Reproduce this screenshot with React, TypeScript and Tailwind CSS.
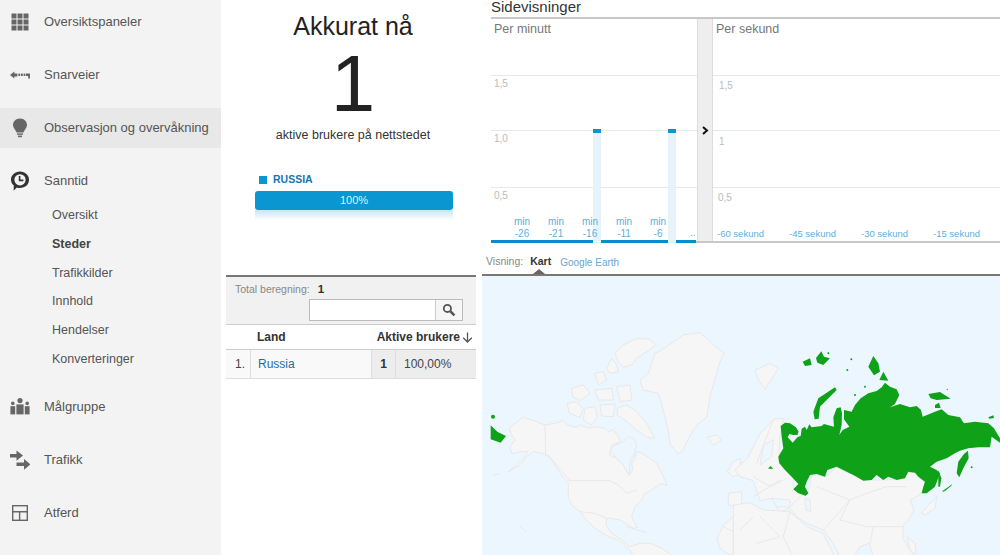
const GridIcon = () => (
  <svg width="20" height="20" viewBox="0 0 20 20" fill="#666">
    <rect x="1.5" y="1.5" width="5" height="5" />
    <rect x="7.5" y="1.5" width="5" height="5" />
    <rect x="13.5" y="1.5" width="5" height="5" />
    <rect x="1.5" y="7.5" width="5" height="5" />
    <rect x="7.5" y="7.5" width="5" height="5" />
    <rect x="13.5" y="7.5" width="5" height="5" />
    <rect x="1.5" y="13.5" width="5" height="5" />
    <rect x="7.5" y="13.5" width="5" height="5" />
    <rect x="13.5" y="13.5" width="5" height="5" />
  </svg>
);

const ShortcutIcon = () => (
  <svg width="20" height="20" viewBox="0 0 20 20" fill="#666">
    <path d="M0 10 L4.4 6.4 V8.6 H7.4 V11.4 H4.4 V13.6 Z" />
    <rect x="8.4" y="8.6" width="1.8" height="2.4" />
    <rect x="11" y="8.6" width="1.8" height="2.4" />
    <rect x="13.6" y="8.6" width="1.6" height="2.4" />
    <path d="M15.8 8.6 H20 V13.4 H18.2 V11 H15.8 Z" />
  </svg>
);

const BulbIcon = () => (
  <svg width="20" height="20" viewBox="0 0 20 20" fill="#666">
    <path d="M10 0.5 C14 0.5 17 3.4 17 7 C17 10 14.6 11.5 13.4 14.5 H6.6 C5.4 11.5 3 10 3 7 C3 3.4 6 0.5 10 0.5 Z" />
    <rect x="7" y="15.4" width="6" height="1.4" />
    <rect x="8" y="17.6" width="4" height="1.6" />
  </svg>
);

const ClockIcon = () => (
  <svg width="20" height="20" viewBox="0 0 20 20">
    <path d="M10 0.5 C15.2 0.5 19 4.2 19 8.8 C19 13.6 15.2 17 10 17 C8.8 17 7.8 16.8 6.8 16.4 L3.6 19.8 L3.8 14.6 C2 13 1 11 1 8.8 C1 4.2 4.8 0.5 10 0.5 Z" fill="#333" />
    <circle cx="10" cy="8.8" r="5.6" fill="#f3f3f3" />
    <path d="M9.6 5 V9.4 H13.4" fill="none" stroke="#333" strokeWidth="1.6" />
  </svg>
);

const PeopleIcon = () => (
  <svg width="20" height="20" viewBox="0 0 20 20" fill="#666">
    <circle cx="10" cy="3.6" r="2.6" />
    <circle cx="2.8" cy="6.4" r="1.8" />
    <circle cx="17.2" cy="6.4" r="1.8" />
    <path d="M6.4 7.4 H13.6 V17.4 H6.4 Z" />
    <path d="M0.4 9.2 H5.2 V17.4 H0.4 Z" />
    <path d="M14.8 9.2 H19.6 V17.4 H14.8 Z" />
  </svg>
);

const TrafficIcon = () => (
  <svg width="20" height="20" viewBox="0 0 20 20" fill="#666">
    <path d="M-0.5 4 H6.5 V0.4 L13 5.6 L6.5 10.8 V7.4 H-0.5 Z" />
    <path d="M6.5 12.4 H14 V9 L20.5 14.4 L14 19.8 V16 H6.5 Z" />
  </svg>
);

const LayoutIcon = () => (
  <svg width="20" height="20" viewBox="0 0 20 20" fill="none" stroke="#666" strokeWidth="1.4">
    <rect x="2.7" y="2.7" width="14.6" height="14.6" />
    <path d="M2.7 8.8 H17.3 M9.6 8.8 V17.3" />
  </svg>
);

const SearchIcon = () => (
  <svg width="14" height="14" viewBox="0 0 14 14" fill="none" stroke="#555">
    <circle cx="5.4" cy="5.4" r="3.6" strokeWidth="1.8" />
    <path d="M8.2 8.2 L12.4 12.4" strokeWidth="2.6" />
  </svg>
);

const navTop = [
  { label: "Oversiktspaneler", icon: <GridIcon /> },
  { label: "Snarveier", icon: <ShortcutIcon /> },
  { label: "Observasjon og overvåkning", icon: <BulbIcon />, active: true },
  { label: "Sanntid", icon: <ClockIcon /> },
];
const navSub = ["Oversikt", "Steder", "Trafikkilder", "Innhold", "Hendelser", "Konverteringer"];
const navBottom = [
  { label: "Målgruppe", icon: <PeopleIcon /> },
  { label: "Trafikk", icon: <TrafficIcon /> },
  { label: "Atferd", icon: <LayoutIcon /> },
];

function NavRow({ label, icon, active }: { label: string; icon: React.ReactNode; active?: boolean }) {
  return (
    <div className={active ? "mb-[13px] flex h-[40px] items-center bg-[#e8e8e8]" : "mb-[13px] flex h-[40px] items-center"}>
      <div className="ml-[10px] w-[34px]">{icon}</div>
      <span className="text-[13px] text-[#555]">{label}</span>
    </div>
  );
}

function Sidebar() {
  return (
    <aside className="h-full w-[221px] shrink-0 bg-[#f3f3f3] pt-[2px]">
      {navTop.map((n) => (
        <NavRow key={n.label} {...n} />
      ))}
      <div className="-mt-[13px] mb-[13px] pl-[52px]">
        {navSub.map((s) => (
          <div
            key={s}
            className={s === "Steder" ? "flex h-[28.8px] items-center text-[12.5px] font-bold text-[#444]" : "flex h-[28.8px] items-center text-[12.5px] text-[#555]"}
          >
            {s}
          </div>
        ))}
      </div>
      {navBottom.map((n) => (
        <NavRow key={n.label} {...n} />
      ))}
    </aside>
  );
}

function ActivePanel() {
  return (
    <section className="w-[260px] shrink-0 px-[5px]">
      <div className="flex h-[275px] flex-col items-center pl-[4px]">
        <h1 className="mt-[10px] text-[25px] leading-[32px] text-[#222]">Akkurat nå</h1>
        <div className="mt-0 text-[80px] leading-[84px] text-[#222]">1</div>
        <p className="mt-px text-[12.5px] leading-[16px] text-[#333]">aktive brukere på nettstedet</p>
        <div className="mt-[29px] ml-[2px] w-[198px]">
          <div className="ml-[4px] flex items-center gap-[6px]">
            <span className="size-[8px] bg-[#0a96d0]" />
            <span className="text-[10.5px] font-bold text-[#1a74b0]">RUSSIA</span>
          </div>
          <div className="mt-[3px] flex h-[19px] items-center justify-center rounded-[3px] bg-[#0a96d0] text-[11px] text-[#dff2fb]">
            100%
          </div>
          <div className="h-[10px] bg-gradient-to-b from-[#c4e6f5] to-white" />
        </div>
      </div>

      <div className="w-[250px] border-t-2 border-[#777] text-[12px]">
        <div className="h-[48px] border-b border-[#ccc] bg-[#f1f1f1] pl-[9px]">
          <div className="flex items-center pt-[5px] leading-[14px]">
            <span className="text-[10.5px] text-[#888]">Total beregning:</span>
            <span className="ml-[8px] text-[11.5px] font-bold text-[#333]">1</span>
          </div>
          <div className="mt-[3px] ml-[74px] flex h-[22px] w-[154px] border border-[#bbb] bg-white">
            <div className="flex-1" />
            <div className="flex w-[27px] items-center justify-center border-l border-[#ccc] bg-[#f6f6f6]">
              <SearchIcon />
            </div>
          </div>
        </div>
        <div className="flex h-[25px] items-center border-b border-[#ccc] bg-white font-bold text-[#333]">
          <span className="w-[31px]" />
          <span>Land</span>
          <span className="ml-auto">Aktive brukere</span>
          <span className="ml-[2px] mr-[3px] text-[#555]">
            <svg width="11" height="11" viewBox="0 0 11 11" fill="none" stroke="#555" strokeWidth="1.3">
              <path d="M5.5 0.5 V10 M1.2 5.8 L5.5 10 L9.8 5.8" />
            </svg>
          </span>
        </div>
        <div className="flex h-[29px] items-center border-b border-[#ddd] text-[#444]">
          <span className="flex h-full w-[25px] items-center border-r border-[#ddd] bg-[#f9f9f9] pl-[9px]">1.</span>
          <span className="flex h-full w-[121px] items-center border-r border-[#ddd] bg-[#f9f9f9] pl-[7px] text-[#1a6ea8]">Russia</span>
          <span className="flex h-full w-[24px] items-center justify-center border-r border-[#ddd] bg-[#ededed] font-bold text-[#333]">1</span>
          <span className="flex h-full flex-1 items-center bg-[#ededed] pl-[8px]">100,00%</span>
        </div>
      </div>
    </section>
  );
}

const minuteLabels = [
  { a: "-26", c: "left-[21px]" },
  { a: "-21", c: "left-[55px]" },
  { a: "-16", c: "left-[89px]" },
  { a: "-11", c: "left-[123px]" },
  { a: "-6", c: "left-[157px]" },
];
const secondLabels = [
  { a: "-60 sekund", c: "left-[4px]" },
  { a: "-45 sekund", c: "left-[76px]" },
  { a: "-30 sekund", c: "left-[148px]" },
  { a: "-15 sekund", c: "left-[220px]" },
];

function GridLines() {
  return (
    <>
      <div className="absolute inset-x-0 top-[56px] h-px bg-[#e8e8e8]" />
      <div className="absolute inset-x-0 top-[111px] h-px bg-[#e8e8e8]" />
      <div className="absolute inset-x-0 top-[168px] h-px bg-[#e8e8e8]" />
    </>
  );
}

function Charts() {
  return (
    <div className="flex h-[226px] border-y-2 border-y-[#c8c8c8]">
      <div className="relative w-[206px] shrink-0">
        <GridLines />
        <span className="absolute left-[3px] top-px text-[12.5px] text-[#777]">Per minutt</span>
        <span className="absolute left-[3px] top-[57px] text-[10px] text-[#bbb]">1,5</span>
        <span className="absolute left-[3px] top-[112px] text-[10px] text-[#bbb]">1,0</span>
        <span className="absolute left-[3px] top-[169px] text-[10px] text-[#bbb]">0,5</span>
        <div className="absolute left-[102px] top-[110px] h-[114px] w-[8px] bg-[#e6f3fb]">
          <div className="h-[4px] bg-[#0a96d0]" />
        </div>
        <div className="absolute left-[177px] top-[110px] h-[114px] w-[8px] bg-[#e6f3fb]">
          <div className="h-[4px] bg-[#0a96d0]" />
        </div>
        {minuteLabels.map((l) => (
          <div key={l.a} className={`absolute top-[197px] w-[20px] text-center text-[10px] leading-[12px] text-[#5bb0dc] ${l.c}`}>
            <div>min</div>
            <div>{l.a}</div>
          </div>
        ))}
        <span className="absolute left-[199px] top-[208px] text-[10px] leading-[12px] text-[#5bb0dc]">..</span>
        <div className="absolute -bottom-[2px] left-0 h-[3px] w-[102px] bg-[#0a8cc8]" />
        <div className="absolute -bottom-[2px] left-[110px] h-[3px] w-[67px] bg-[#0a8cc8]" />
        <div className="absolute -bottom-[2px] left-[185px] h-[3px] w-[20px] bg-[#0a8cc8]" />
      </div>
      <div className="relative flex w-[16px] shrink-0 items-start justify-center border-x border-x-[#ddd] bg-[#eeeeee] pt-[107px]">
        <svg width="7" height="9" viewBox="0 0 7 9" fill="none" stroke="#111" strokeWidth="2">
          <path d="M1 1 L5 4.5 L1 8" />
        </svg>
      </div>
      <div className="relative flex-1">
        <GridLines />
        <span className="absolute left-[3px] top-px text-[12.5px] text-[#777]">Per sekund</span>
        <span className="absolute left-[6px] top-[59px] text-[10px] text-[#bbb]">1,5</span>
        <span className="absolute left-[6px] top-[115px] text-[10px] text-[#bbb]">1</span>
        <span className="absolute left-[5px] top-[171px] text-[10px] text-[#bbb]">0,5</span>
        {secondLabels.map((l) => (
          <span key={l.a} className={`absolute top-[209px] text-[9.5px] leading-[12px] text-[#5bb0dc] ${l.c}`}>
            {l.a}
          </span>
        ))}
      </div>
    </div>
  );
}

const land = "#f6f6f6";
const edge = "#e6e6e6";
const sea = "#ebf6fe";
const green = "#0fa118";

// Map is drawn in reference page coordinates; each group is traced at 3x
function WorldMap() {
  return (
    <svg className="block" width="518" height="279" viewBox="482 276 518 279">
      <rect x="482" y="276" width="518" height="279" fill={sea} />
      <g transform="translate(480 330) scale(0.3333)" fill={land} stroke={edge} strokeWidth="2.6" strokeLinejoin="round">
        <path d="M88 295 L100 285 L128 262 L150 268 L195 285 L225 280 L250 272 L262 285 L290 292 L300 285 L325 295 L345 290 L375 295 L385 305 L400 300 L415 320 L420 335 L395 345 L388 375 L410 385 L430 405 L448 437 L458 420 L455 400 L465 385 L470 365 L490 372 L510 385 L530 400 L545 430 L552 445 L562 465 L540 462 L515 480 L495 490 L485 510 L465 530 L455 560 L462 575 L472 592 L460 595 L445 585 L420 570 L395 565 L380 565 L378 585 L395 610 L425 630 L450 650 L480 640 L510 640 L545 655 L575 675 L560 682 L465 682 L445 655 L415 630 L385 620 L345 595 L320 570 L300 545 L275 525 L265 500 L265 460 L245 435 L225 405 L205 378 L180 368 L160 365 L140 380 L120 405 L85 425 L110 405 L130 385 L145 365 L120 365 L95 372 L90 350 L105 330 L95 315 Z" />
        <path d="M195 285 L197 372 M205 375 L270 452 M265 452 L390 452 L415 465 L440 490 L470 480 M300 545 L345 550 L380 565" fill="none" />
        <path d="M390 360 L405 345 L430 335 L445 320 L460 325 L470 345 L462 375 L450 395 L448 437 L430 405 L410 385 Z" fill={sea} />
        <path d="M405 70 L430 45 L470 25 L510 28 L527 45 L505 62 L470 85 L455 105 L430 112 L415 95 Z" />
        <path d="M380 115 L395 85 L410 105 L415 125 L390 130 Z" />
        <path d="M345 130 L370 125 L380 150 L355 165 Z" />
        <path d="M410 170 L450 165 L455 210 L420 215 Z" />
        <path d="M345 180 L395 175 L400 210 L355 210 Z" />
        <path d="M275 175 L310 165 L330 190 L300 212 L278 200 Z" />
        <path d="M262 220 L290 215 L310 235 L300 262 L268 250 Z" />
        <path d="M315 235 L345 230 L352 262 L335 285 L310 270 Z" />
        <path d="M360 225 L405 222 L400 260 L365 258 Z" />
        <path d="M412 235 L440 225 L470 245 L500 280 L525 325 L500 322 L470 300 L435 270 L412 255 Z" />
        <path d="M480 150 L505 130 L525 70 L545 60 L570 42 L590 30 L610 15 L660 8 L680 25 L695 40 L732 70 L722 90 L715 112 L700 165 L690 200 L680 262 L655 280 L640 300 L620 335 L610 360 L596 372 L580 355 L570 340 L565 300 L555 262 L545 220 L535 190 L490 180 Z" />
        <path d="M682 322 L710 315 L725 330 L700 345 Z" />
        <path d="M742 425 L760 395 L780 385 L785 430 L760 440 Z" />
        <path d="M745 490 L785 485 L785 530 L745 525 Z" />
        <path d="M712 625 L730 585 L760 560 L790 555 L790 682 L745 672 L720 655 Z" />
        <path d="M730 590 L790 620 M760 560 L760 682" fill="none" />
        <path d="M120 590 L138 605 M40 435 L60 432 M440 590 L500 608" fill="none" />
      </g>
      <g transform="translate(480 330) scale(0.3333)" fill={green}>
        <circle cx="39" cy="260" r="6" />
        <path d="M32 286 L52 305 L78 318 L62 338 L32 328 Z" />
      </g>
      <g transform="translate(740 330) scale(0.3333)" fill={land} stroke={edge} strokeWidth="2.6" strokeLinejoin="round">
        <path d="M45 120 L90 100 L115 115 L75 178 L55 150 Z" />
        <path d="M22 385 L60 312 L100 268 L130 265 L120 320 L115 395 L160 445 L160 475 L195 497 L205 490 L215 435 L255 440 L290 412 L340 435 L385 450 L440 450 L490 445 L505 425 L530 430 L555 460 L545 490 L520 505 L510 510 L522 540 L505 570 L490 585 L488 625 L525 682 L400 682 L388 640 L360 650 L340 682 L300 682 L280 640 L250 600 L200 580 L170 560 L150 535 L120 545 L95 505 L60 512 L40 452 L0 440 L-15 420 Z" />
        <path d="M-20 525 L30 518 L70 540 L150 545 L200 590 L250 610 L285 682 L-20 682 Z" />
        <path d="M545 550 L565 525 L590 500 L585 535 L555 555 Z" />
        <path d="M502 620 L525 640 L530 682 L510 660 Z" />
        <path d="M95 505 L150 510 L150 532 L110 530 Z" fill={sea} />
        <path d="M195 505 L210 508 L212 545 L198 540 Z" fill={sea} />
        <path d="M70 345 L100 330 L95 380 L60 405 Z" fill={sea} />
        <path d="M40 440 L90 470 L130 450 M230 470 L330 510 L380 490 L440 470 L500 470 M330 510 L300 570 L380 590 L490 590 M150 530 L200 480 M60 560 L120 620 L50 640 M150 545 L130 620 L160 682 M250 600 L330 510 M400 590 L390 640 M100 268 L50 400 M40 500 L120 450 M40 560 L0 600" fill="none" />
      </g>
      <g transform="translate(740 330) scale(0.3333)" fill={green}>
        <path d="M122 288 L135 278 L150 280 L168 292 L176 305 L172 315 L160 315 L148 312 L143 322 L158 338 L172 322 L182 318 L185 296 L195 290 L200 300 L208 283 L215 292 L245 288 L252 282 L282 290 L280 262 L290 235 L302 232 L306 250 L305 285 L298 315 L308 300 L328 290 L312 268 L312 240 L335 245 L345 225 L362 205 L385 190 L410 183 L425 172 L435 158 L450 170 L470 178 L478 195 L465 222 L450 232 L480 222 L510 232 L530 228 L543 240 L548 260 L585 245 L605 238 L625 255 L660 262 L672 280 L705 275 L745 280 L762 295 L780 325 L780 338 L755 320 L750 352 L715 352 L685 355 L660 362 L645 370 L620 385 L590 395 L570 410 L590 420 L600 430 L585 470 L560 490 L545 490 L550 470 L555 455 L535 440 L525 428 L505 425 L495 445 L470 450 L445 440 L430 450 L410 435 L395 450 L370 452 L340 435 L320 425 L290 410 L262 420 L255 440 L230 432 L210 435 L200 455 L195 470 L205 490 L197 497 L175 490 L160 478 L175 462 L155 440 L135 420 L118 400 L115 380 L130 355 L125 320 Z" />
        <path d="M684 362 L686 385 L670 415 L658 442 L650 430 L655 395 L672 372 Z" />
        <path d="M220 245 L235 205 L285 172 L290 180 L260 210 L240 230 L236 266 L224 268 Z" />
        <path d="M385 110 L400 78 L415 100 L420 125 L402 136 Z" />
        <path d="M418 150 L430 125 L445 152 Z" />
        <path d="M565 192 L600 186 L632 206 L590 210 L572 205 Z" />
        <path d="M585 225 L597 218 L602 234 L585 234 Z" />
        <path d="M595 420 L604 445 L600 470 L595 470 Z" />
        <path d="M745 262 L760 256 L762 264 L748 266 Z" />
        <path d="M84 416 L92 408 L100 416 Z" />
        <path d="M188 95 L210 85 L215 105 L195 108 Z" />
        <path d="M228 84 L244 64 L252 80 L270 85 L250 105 L232 98 Z" />
        <circle cx="265" cy="70" r="3" />
        <circle cx="334" cy="88" r="3" />
        <circle cx="322" cy="120" r="3" />
        <circle cx="345" cy="195" r="3" />
        <circle cx="375" cy="170" r="3" />
        <circle cx="622" cy="178" r="2" />
        <circle cx="695" cy="412" r="3" />
        <path d="M608 484 L635 465 L615 482 Z" stroke={green} strokeWidth="2" />
      </g>
    </svg>
  );
}

function RightPanel() {
  return (
    <section className="flex min-w-0 flex-1 flex-col overflow-hidden">
      <h2 className="ml-[10px] h-[17px] text-[15px] leading-[13px] text-[#333]">Sidevisninger</h2>
      <div className="ml-[10px]">
        <Charts />
      </div>
      <div className="relative ml-px flex h-[33px] items-center border-b-2 border-[#777] pt-[7px] pl-[4px] text-[10.5px]">
        <span className="text-[#888]">Visning:</span>
        <span className="ml-[7px] font-bold text-[#333]">Kart</span>
        <span className="ml-[9px] text-[10px] text-[#6ba5d0]">Google Earth</span>
        <span className="absolute bottom-0 left-[51px] size-0 border-x-[6px] border-b-[5px] border-x-transparent border-b-[#666]" />
      </div>
      <div className="ml-px">
        <WorldMap />
      </div>
    </section>
  );
}

export default function App() {
  return (
    <div className="flex h-[555px] w-[1000px] overflow-hidden bg-white font-['Liberation_Sans',Arial,sans-serif]">
      <Sidebar />
      <ActivePanel />
      <RightPanel />
    </div>
  );
}
